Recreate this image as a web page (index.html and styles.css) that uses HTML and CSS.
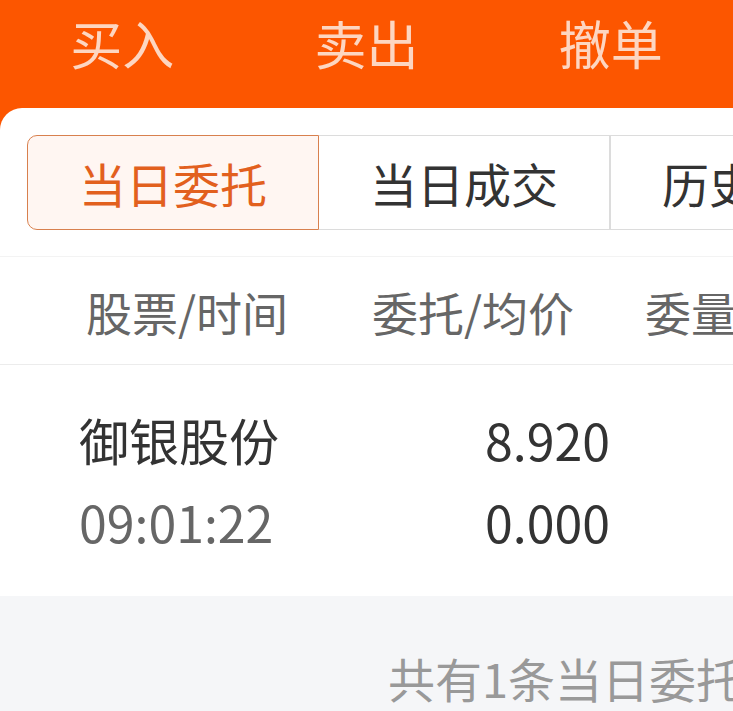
FILE: index.html
```html
<!DOCTYPE html>
<html lang="zh-CN">
<head>
    <meta charset="UTF-8">
    <meta name="viewport" content="width=device-width, initial-scale=1.0">
    <title>当日委托</title>
    <link rel="stylesheet" href="styles.css">
</head>
<body>
    <div class="page">
        <div class="top-tabs">
            <div class="top-tab">买入</div>
            <div class="top-tab">卖出</div>
            <div class="top-tab">撤单</div>
        </div>
        <div class="card">
            <div class="segments">
                <div class="segment active">当日委托</div>
                <div class="segment">当日成交</div>
                <div class="segment">历史委托</div>
            </div>
            <div class="table-head">
                <div class="th th-stock">股票/时间</div>
                <div class="th th-price">委托/均价</div>
                <div class="th th-qty">委量/成交</div>
            </div>
            <div class="row">
                <div class="cell cell-stock">
                    <div class="name">御银股份</div>
                    <div class="time">09:01:22</div>
                </div>
                <div class="cell cell-price">
                    <div class="num">8.920</div>
                    <div class="num">0.000</div>
                </div>
            </div>
            <div class="footer">
                <div class="total">共有1条当日委托记录</div>
            </div>
        </div>
    </div>
</body>
</html>
```

FILE: styles.css
```css
body {
    margin: 0;
    padding: 0;
    background-color: #fc5600;
    font-family: "Noto Sans CJK SC", "Noto Sans", sans-serif;
    overflow: hidden;
}

.page {
    width: 733px;
    height: 711px;
    overflow: hidden;
}

/* Orange header with trade tabs */
.top-tabs {
    display: flex;
    height: 108px;
    background-color: #fc5600;
}

.top-tab {
    flex: 1;
    display: flex;
    justify-content: center;
    align-items: center;
    padding-bottom: 24px;
    font-size: 52px;
    color: #fdd6c1;
}

.card {
    background: #fff;
    border-radius: 22px 0 0 0;
    height: 603px;
    overflow: hidden;
}

/* Segmented control */
.segments {
    display: flex;
    padding: 27px 0 0 27px;
    white-space: nowrap;
}

.segment {
    flex: 0 0 292px;
    height: 95px;
    box-sizing: border-box;
    display: flex;
    justify-content: center;
    align-items: center;
    font-size: 47px;
    color: #333;
    border-top: 1px solid #dcdcdc;
    border-bottom: 1px solid #dcdcdc;
    border-right: 2px solid #dcdcdc;
}

.segment.active {
    background: #fff6f2;
    color: #e2601e;
    border: 1px solid #d8804e;
    border-radius: 10px 0 0 10px;
}

/* Table */
.table-head {
    display: flex;
    margin-top: 26px;
    height: 109px;
    align-items: center;
    border-top: 1px solid #f3f3f3;
    border-bottom: 1px solid #ececec;
    white-space: nowrap;
    box-sizing: border-box;
}

.th {
    font-size: 46px;
    color: #666;
}

.th-stock {
    padding-left: 86px;
    width: 200px;
}

.th-price {
    padding-left: 86px;
    width: 187px;
}

.th-qty {
    padding-left: 86px;
}

.row {
    display: flex;
    height: 231px;
    padding-top: 33px;
    box-sizing: border-box;
}

.cell-stock {
    padding-left: 79px;
    width: 300px;
}

.cell-price {
    width: 231px;
    text-align: right;
}

.name, .time, .num {
    font-size: 50px;
    line-height: 82px;
}

.name, .num {
    color: #333;
}

.time {
    color: #666;
}

.footer {
    background: #f5f6f8;
    height: 115px;
    padding-left: 388px;
    white-space: nowrap;
}

.total {
    padding-top: 47px;
    font-size: 47px;
    color: #999;
}
```
